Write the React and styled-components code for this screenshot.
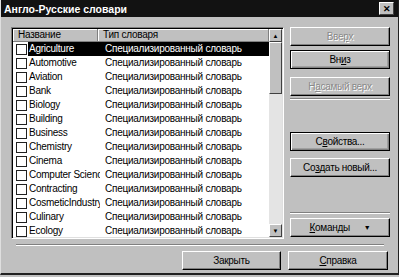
import styled, { createGlobalStyle } from "styled-components";

const GlobalStyle = createGlobalStyle`
  body {
    margin: 0;
    background: #c0c0c0;
    font-family: "Liberation Sans", Arial, sans-serif;
  }
`;

const dictionaries = [
  "Agriculture",
  "Automotive",
  "Aviation",
  "Bank",
  "Biology",
  "Building",
  "Business",
  "Chemistry",
  "Cinema",
  "Computer Science",
  "Contracting",
  "CosmeticIndustry",
  "Culinary",
  "Ecology",
];

export default function App() {
  return (
    <>
      <GlobalStyle />
      <Window>
        <TitleBar>
          <span>Англо-Русские словари</span>
          <CloseButton>✕</CloseButton>
        </TitleBar>
        <Body>
          <ListView>
            <ListInner>
              <Header>
                <HeaderCell width={85}>Название</HeaderCell>
                <HeaderCell>Тип словаря</HeaderCell>
              </Header>
              {dictionaries.map((name, i) => (
                <Row key={name}>
                  <Check />
                  <NameCell selected={i === 0}>{name}</NameCell>
                  <TypeCell selected={i === 0}>Специализированный словарь</TypeCell>
                </Row>
              ))}
            </ListInner>
            <ScrollBar>
              <ArrowButton>▲</ArrowButton>
              <Track>
                <Thumb />
              </Track>
              <ArrowButton>▼</ArrowButton>
            </ScrollBar>
          </ListView>
          <Side>
            <Button disabled>Вве<u>р</u>х</Button>
            <Button strong gap={4}>Вн<u>и</u>з</Button>
            <Button disabled gap={8}>Н<u>а</u> самый верх</Button>
            <Separator gap={2} />
            <Spacer />
            <Button strong>С<u>в</u>ойства...</Button>
            <Button gap={7}>Со<u>з</u>дать новый...</Button>
            <Spacer />
            <Separator />
            <Button gap={4}>
              <u>К</u>оманды <Caret>▼</Caret>
            </Button>
          </Side>
        </Body>
        <Separator wide />
        <Footer>
          <Button width={99}>Закрыть</Button>
          <Button width={100}><u>С</u>правка</Button>
        </Footer>
      </Window>
    </>
  );
}

const Window = styled.div`
  width: 399px;
  height: 275px;
  box-sizing: border-box;
  display: flex;
  flex-direction: column;
  background: #c0c0c0;
  border-left: 1px solid #dfdfdf;
  border-right: 1px solid #202020;
  border-bottom: 2px solid #202020;
`;

const TitleBar = styled.div`
  height: 17px;
  display: flex;
  align-items: center;
  justify-content: space-between;
  padding: 0 4px 0 3px;
  background: #121212;
  color: #ffffff;
  font-weight: 700;
  font-size: 10.5px;
`;

const CloseButton = styled.div`
  width: 13px;
  height: 11px;
  display: flex;
  align-items: center;
  justify-content: center;
  background: #c0c0c0;
  color: #000;
  font-size: 9px;
  font-weight: 700;
  border: 1px solid;
  border-color: #fff #404040 #404040 #fff;
`;

const Body = styled.div`
  display: flex;
  gap: 6px;
  padding: 10px 0 0 10px;
`;

const ListView = styled.div`
  width: 273px;
  height: 212px;
  box-sizing: border-box;
  display: flex;
  background: #fff;
  border: 1px solid;
  border-color: #808080 #fff #fff #808080;
  box-shadow: inset 1px 1px 0 #000, inset -1px -1px 0 #dfdfdf;
  padding: 1px;
  overflow: hidden;
`;

const ListInner = styled.div`
  flex: 1;
  min-width: 0;
  font-size: 10px;
  letter-spacing: -0.25px;
  color: #000;
`;

const Header = styled.div`
  display: flex;
  height: 13px;
`;

const HeaderCell = styled.div`
  ${(p) => (p.width ? `width: ${p.width}px;` : "flex: 1;")}
  box-sizing: border-box;
  padding-left: 5px;
  line-height: 12px;
  background: #c0c0c0;
  border-right: 1px solid #808080;
  border-bottom: 1px solid #808080;
  box-shadow: inset 1px 1px 0 #fff;
`;

const Row = styled.div`
  display: flex;
  align-items: center;
  height: 14px;
`;

const Check = styled.div`
  width: 9px;
  height: 9px;
  margin: 0 1px 0 3px;
  border: 1px solid #202020;
  background: #fff;
  flex-shrink: 0;
`;

const NameCell = styled.div`
  width: 71px;
  height: 14px;
  line-height: 14px;
  padding-left: 1px;
  white-space: nowrap;
  overflow: hidden;
  background: ${(p) => (p.selected ? "#000" : "transparent")};
  color: ${(p) => (p.selected ? "#fff" : "#000")};
`;

const TypeCell = styled.div`
  flex: 1;
  height: 14px;
  line-height: 14px;
  padding-left: 5px;
  white-space: nowrap;
  overflow: hidden;
  background: ${(p) => (p.selected ? "#000" : "transparent")};
  color: ${(p) => (p.selected ? "#fff" : "#000")};
`;

const ScrollBar = styled.div`
  width: 13px;
  display: flex;
  flex-direction: column;
  background: #c0c0c0;
`;

const ArrowButton = styled.div`
  height: 11px;
  display: flex;
  align-items: center;
  justify-content: center;
  font-size: 6px;
  color: #000;
  background: #c0c0c0;
  border: 1px solid;
  border-color: #fff #404040 #404040 #fff;
`;

const Track = styled.div`
  flex: 1;
  background: #e4e4e4;
`;

const Thumb = styled.div`
  height: 52px;
  box-sizing: border-box;
  background: #c0c0c0;
  border: 1px solid;
  border-color: #fff #404040 #404040 #fff;
`;

const Side = styled.div`
  width: 100px;
  height: 210px;
  display: flex;
  flex-direction: column;
`;

const Spacer = styled.div`
  flex: 1;
`;

const Button = styled.div`
  width: ${(p) => (p.width ? `${p.width}px` : "100%")};
  height: 19px;
  margin-top: ${(p) => p.gap || 0}px;
  box-sizing: border-box;
  display: flex;
  align-items: center;
  justify-content: center;
  font-size: 10px;
  letter-spacing: -0.3px;
  background: #c0c0c0;
  color: ${(p) => (p.disabled ? "#8a8a8a" : "#000")};
  text-shadow: ${(p) => (p.disabled ? "1px 1px 0 #fff" : "none")};
  border: 1px solid;
  border-color: ${(p) => (p.strong ? "#000" : "#fff #000 #000 #fff")};
  box-shadow: ${(p) =>
    p.strong
      ? "inset 1px 1px 0 #fff, inset -1px -1px 0 #808080, inset -2px -2px 0 #a0a0a0"
      : "inset -1px -1px 0 #808080"};
  white-space: nowrap;
`;

const Caret = styled.span`
  font-size: 7px;
  margin-left: 14px;
`;

const Separator = styled.div`
  height: 0;
  margin-top: ${(p) => p.gap ?? 4}px;
  border-top: 1px solid #808080;
  border-bottom: 1px solid #fff;
  ${(p) => p.wide && "margin: 5px 14px 0 15px;"}
`;

const Footer = styled.div`
  display: flex;
  justify-content: flex-end;
  gap: 7px;
  padding: 5px 10px 0 0;
`;
